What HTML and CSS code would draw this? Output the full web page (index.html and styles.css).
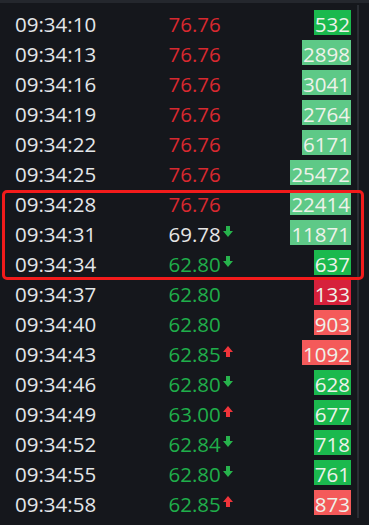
FILE: index.html
```html
<!DOCTYPE html>
<html>
<head>
<meta charset="utf-8">
<link rel="stylesheet" href="styles.css">
</head>
<body>
<div class="panel">
  <div class="rows">
    <div class="row"><span class="time">09:34:10</span><span class="price red">76.76</span><span class="vol"><span class="badge g1">532</span></span></div>
    <div class="row"><span class="time">09:34:13</span><span class="price red">76.76</span><span class="vol"><span class="badge g2">2898</span></span></div>
    <div class="row"><span class="time">09:34:16</span><span class="price red">76.76</span><span class="vol"><span class="badge g2">3041</span></span></div>
    <div class="row"><span class="time">09:34:19</span><span class="price red">76.76</span><span class="vol"><span class="badge g2">2764</span></span></div>
    <div class="row"><span class="time">09:34:22</span><span class="price red">76.76</span><span class="vol"><span class="badge g2">6171</span></span></div>
    <div class="row"><span class="time">09:34:25</span><span class="price red">76.76</span><span class="vol"><span class="badge g2">25472</span></span></div>
    <div class="highlight">
      <div class="row"><span class="time">09:34:28</span><span class="price red">76.76</span><span class="vol"><span class="badge g2">22414</span></span></div>
      <div class="row"><span class="time">09:34:31</span><span class="price white">69.78<svg class="arrow" width="10" height="11" viewBox="0 0 10 11"><path d="M3 0H7V5H10L5 11L0 5H3Z" fill="#27b34c"/></svg></span><span class="vol"><span class="badge g2">11871</span></span></div>
      <div class="row"><span class="time">09:34:34</span><span class="price green">62.80<svg class="arrow" width="10" height="11" viewBox="0 0 10 11"><path d="M3 0H7V5H10L5 11L0 5H3Z" fill="#27b34c"/></svg></span><span class="vol"><span class="badge g1">637</span></span></div>
    </div>
    <div class="row"><span class="time">09:34:37</span><span class="price green">62.80</span><span class="vol"><span class="badge r1">133</span></span></div>
    <div class="row"><span class="time">09:34:40</span><span class="price green">62.80</span><span class="vol"><span class="badge r2">903</span></span></div>
    <div class="row"><span class="time">09:34:43</span><span class="price green">62.85<svg class="arrow" width="10" height="11" viewBox="0 0 10 11"><path d="M3 11H7V6H10L5 0L0 6H3Z" fill="#f0343a"/></svg></span><span class="vol"><span class="badge r2">1092</span></span></div>
    <div class="row"><span class="time">09:34:46</span><span class="price green">62.80<svg class="arrow" width="10" height="11" viewBox="0 0 10 11"><path d="M3 0H7V5H10L5 11L0 5H3Z" fill="#27b34c"/></svg></span><span class="vol"><span class="badge g1">628</span></span></div>
    <div class="row"><span class="time">09:34:49</span><span class="price green">63.00<svg class="arrow" width="10" height="11" viewBox="0 0 10 11"><path d="M3 11H7V6H10L5 0L0 6H3Z" fill="#f0343a"/></svg></span><span class="vol"><span class="badge g1">677</span></span></div>
    <div class="row"><span class="time">09:34:52</span><span class="price green">62.84<svg class="arrow" width="10" height="11" viewBox="0 0 10 11"><path d="M3 0H7V5H10L5 11L0 5H3Z" fill="#27b34c"/></svg></span><span class="vol"><span class="badge g1">718</span></span></div>
    <div class="row"><span class="time">09:34:55</span><span class="price green">62.80<svg class="arrow" width="10" height="11" viewBox="0 0 10 11"><path d="M3 0H7V5H10L5 11L0 5H3Z" fill="#27b34c"/></svg></span><span class="vol"><span class="badge g1">761</span></span></div>
    <div class="row"><span class="time">09:34:58</span><span class="price green">62.85<svg class="arrow" width="10" height="11" viewBox="0 0 10 11"><path d="M3 11H7V6H10L5 0L0 6H3Z" fill="#f0343a"/></svg></span><span class="vol"><span class="badge r2">873</span></span></div>
  </div>
  <div class="track"></div>
</div>
</body>
</html>
```
FILE: styles.css
```css
html, body {
  margin: 0;
  padding: 0;
  background: #15171c;
}
body {
  width: 369px;
  height: 525px;
  overflow: hidden;
  font-family: "Open Sans", "Noto Sans", sans-serif;
}
.panel {
  display: flex;
  border-top: 3px solid #24272d;
  padding-top: 6px;
  height: 516px;
  box-sizing: border-box;
}
.rows {
  width: 336px;
  padding-left: 15px;
  flex: none;
}
.row {
  display: grid;
  grid-template-columns: 153.5px 1fr auto;
  align-items: start;
  height: 30px;
  line-height: 30px;
  font-size: 20.5px;
}
.time {
  color: #e4e7ea;
}
.price.red { color: #d8282f; }
.price.green { color: #1fae4a; }
.price.white { color: #e6e6e6; }
.arrow {
  margin-left: 2px;
  vertical-align: 5px;
}
.vol {
  text-align: right;
}
.badge {
  display: inline-block;
  box-sizing: border-box;
  height: 25px;
  padding: 4px 1px 0;
  line-height: 21px;
  color: #eef2ea;
}
.g1 { background: #1bb94e; }
.g2 { background: #5ec987; }
.r1 { background: #d6213b; }
.r2 { background: #f45a5a; }
.highlight {
  position: relative;
}
.highlight::after {
  content: "";
  position: absolute;
  left: -13px;
  right: -13px;
  top: 1px;
  bottom: -1px;
  border: 3px solid #f21b1b;
  border-radius: 5px;
  pointer-events: none;
}
.track {
  width: 2px;
  margin-left: 6px;
  margin-top: -4px;
  margin-bottom: -2px;
  background: #2a2d33;
}
```
